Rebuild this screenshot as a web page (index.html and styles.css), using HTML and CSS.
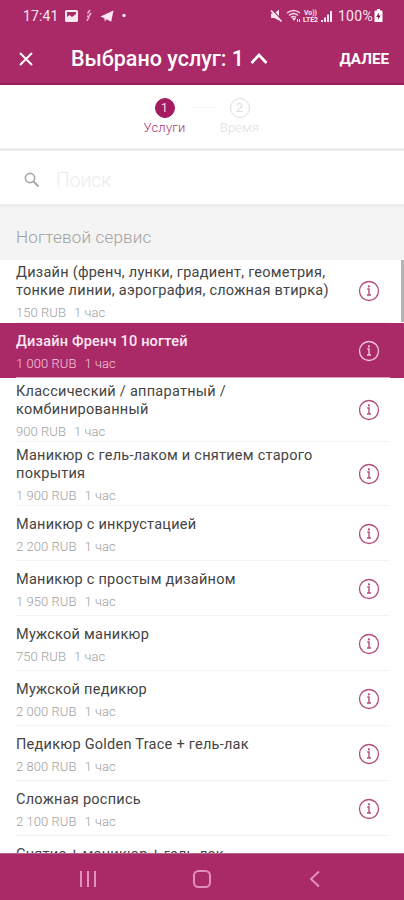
FILE: index.html
```
<!DOCTYPE html>
<html lang="ru">
<head>
<meta charset="utf-8">
<title>Выбор услуг</title>
<link rel="stylesheet" href="styles.css">
</head>
<body>
<svg width="0" height="0" class="defs">
  <symbol id="info" viewBox="0 0 22 22">
    <circle cx="11" cy="11" r="9.5" fill="none" stroke="currentColor" stroke-width="1.3"/>
    <path d="M9.300 9h1.700v6M9 15h4" fill="none" stroke="currentColor" stroke-width="1.400"/>
    <circle cx="10.9" cy="6.4" r="1.100" fill="currentColor"/>
  </symbol>
</svg>
<div class="screen">
  <header class="top">
    <div class="status">
      <span class="clock">17:41</span>
      <svg class="status-left" width="64" height="16" viewBox="0 0 64 16" fill="#fbe6f2">
        <path fill-rule="evenodd" d="M1.5 2h10a1.5 1.5 0 0 1 1.500 1.500v9a1.500 1.500 0 0 1-1.500 1.500h-10a1.500 1.500 0 0 1-1.500-1.500v-9a1.500 1.500 0 0 1 1.500-1.500zM2 4v5l2.500-2 2.500 2 4-3V4z"/>
        <path d="M25 2l-2.500 3.500M22 8l2 1-2 4M26 5l-2 3" fill="none" stroke="#e9b0cf" stroke-width="1.500"/>
        <path d="M35.500 8.500L48.500 2.500 46.200 13.800 41.500 11.300 39.700 13.500 39.500 10.200z"/>
        <circle cx="59" cy="7.500" r="1.700"/>
      </svg>
      <span class="grow"></span>
      <svg width="64" height="16" viewBox="0 0 64 16" fill="#fbe6f2">
        <path d="M1 5.500h3.500L9 1.500v11L4.500 10H1z"/>
        <path d="M1.800 1.500l10.500 11" stroke="#aa2967" stroke-width="1.200"/>
        <path d="M1 2.500l10.500 11" stroke="#fbe6f2" stroke-width="1.800"/>
        <path d="M17 5q6.500-5 13 0M19 7.300q4.500-3.500 9 0M21 9.500q2.500-2 5 0" fill="none" stroke="#f6d3e7" stroke-width="1.500"/>
        <path d="M22 10h4l-2 3zM27 11h1v3h-1zM29 11h1v3h-1z"/>
        <text class="volte" x="34" y="7" textLength="13" lengthAdjust="spacingAndGlyphs">Vo))</text>
        <text class="volte" x="33" y="14" textLength="15" lengthAdjust="spacingAndGlyphs">LTE2</text>
        <path d="M51 12h2v2h-2zM54 9.500h2V14h-2zM57 6.500h2V14h-2zM60 3h2v11h-2z"/>
      </svg>
      <span class="percent">100%</span>
      <svg width="9" height="14" viewBox="0 0 9 14">
        <path d="M3 0h3v1.500h1.500q1 0 1 1V13H.500V2.500q0-1 1-1H3z" fill="#fff"/>
        <path d="M5 3.500L2.200 8H4.200L3.800 11 6.800 6.500H4.800z" fill="#8d1a52"/>
      </svg>
    </div>
    <div class="appbar">
      <svg class="close" width="14" height="14" viewBox="0 0 14 14"><path d="M1 1l12 12M13 1L1 13" stroke="#fff" stroke-width="2"/></svg>
      <span class="title">Выбрано услуг: 1</span>
      <svg class="chevron" width="18" height="12" viewBox="0 0 18 12"><path d="M1.500 10L9 2l7.500 8" fill="none" stroke="#fff" stroke-width="2.700"/></svg>
      <span class="grow"></span>
      <span class="next">ДАЛЕЕ</span>
    </div>
  </header>

  <section class="steps">
    <div class="step active"><span class="num">1</span><span class="label">Услуги</span></div>
    <span class="link"></span>
    <div class="step"><span class="num">2</span><span class="label">Время</span></div>
  </section>

  <section class="search">
    <svg width="16" height="16" viewBox="0 0 16 16" fill="none" stroke="#a9a9a9"><circle cx="6" cy="6" r="4.600" stroke-width="1.700"/><path d="M9.500 9.500l5 5" stroke-width="2"/></svg>
    <span class="placeholder">Поиск</span>
  </section>

  <h2 class="group">Ногтевой сервис</h2>

  <main class="list">
    <article class="row tall"><div class="text"><p class="name">Дизайн (френч, лунки, градиент, геометрия,<br>тонкие линии, аэрография, сложная втирка)</p><p class="meta"><span>150 RUB</span><span>1 час</span></p></div><svg class="info"><use href="#info"/></svg></article>
    <article class="row selected"><div class="text"><p class="name">Дизайн Френч 10 ногтей</p><p class="meta"><span>1 000 RUB</span><span>1 час</span></p></div><svg class="info"><use href="#info"/></svg></article>
    <article class="row tall"><div class="text"><p class="name">Классический / аппаратный /<br>комбинированный</p><p class="meta"><span>900 RUB</span><span>1 час</span></p></div><svg class="info"><use href="#info"/></svg></article>
    <article class="row tall"><div class="text"><p class="name">Маникюр с гель-лаком и снятием старого<br>покрытия</p><p class="meta"><span>1 900 RUB</span><span>1 час</span></p></div><svg class="info"><use href="#info"/></svg></article>
    <article class="row"><div class="text"><p class="name">Маникюр с инкрустацией</p><p class="meta"><span>2 200 RUB</span><span>1 час</span></p></div><svg class="info"><use href="#info"/></svg></article>
    <article class="row"><div class="text"><p class="name">Маникюр с простым дизайном</p><p class="meta"><span>1 950 RUB</span><span>1 час</span></p></div><svg class="info"><use href="#info"/></svg></article>
    <article class="row"><div class="text"><p class="name">Мужской маникюр</p><p class="meta"><span>750 RUB</span><span>1 час</span></p></div><svg class="info"><use href="#info"/></svg></article>
    <article class="row"><div class="text"><p class="name">Мужской педикюр</p><p class="meta"><span>2 000 RUB</span><span>1 час</span></p></div><svg class="info"><use href="#info"/></svg></article>
    <article class="row"><div class="text"><p class="name">Педикюр Golden Trace + гель-лак</p><p class="meta"><span>2 800 RUB</span><span>1 час</span></p></div><svg class="info"><use href="#info"/></svg></article>
    <article class="row"><div class="text"><p class="name">Сложная роспись</p><p class="meta"><span>2 100 RUB</span><span>1 час</span></p></div><svg class="info"><use href="#info"/></svg></article>
    <article class="row"><div class="text"><p class="name">Снятие + маникюр + гель-лак</p></div></article>
    <span class="scrollbar"></span>
  </main>

  <nav class="nav">
    <svg width="18" height="18" viewBox="0 0 18 18"><path d="M2 1v16M9 1v16M16 1v16" stroke="#e190bd" stroke-width="2"/></svg>
    <svg width="20" height="20" viewBox="0 0 20 20"><rect x="2" y="2" width="16" height="16" rx="4.500" fill="none" stroke="#e190bd" stroke-width="2"/></svg>
    <svg width="18" height="18" viewBox="0 0 18 18"><path d="M13 1.500L5 9l8 7.500" fill="none" stroke="#e190bd" stroke-width="2"/></svg>
  </nav>
</div>
</body>
</html>
```
FILE: styles.css
```
* { box-sizing: border-box; }
body { margin: 0; font-family: Roboto, "Noto Sans", sans-serif; background: #fff; }
p, h2 { margin: 0; font-weight: 400; }
svg { flex: none; display: block; }
.defs { position: absolute; }
.screen { width: 404px; height: 900px; overflow: hidden; display: flex; flex-direction: column; }
.grow { flex: 1; }
.top { height: 85px; flex: none; background: #aa2967; border-bottom: 2px solid #981e59; color: #fff; }
.status { height: 32px; display: flex; align-items: center; padding: 0 21px 0 23px; color: #fbe6f2; font-size: 14px; }
.clock { width: 42px; letter-spacing: 0.1px; }
.percent { margin: 0 1px 0 4px; letter-spacing: 0.3px; }
.volte { font-size: 7px; font-weight: 700; }
.appbar { height: 53px; display: flex; align-items: center; padding: 0 15px 0 19px; }
.title { margin-left: 38px; font-size: 21.5px; font-weight: 500; white-space: nowrap; }
.chevron { margin-left: 6px; }
.next { font-size: 15.2px; font-weight: 700; }
.steps { height: 66px; flex: none; border-bottom: 3px solid #ececec; display: flex; justify-content: center; padding-top: 13px; }
.step { width: 50px; display: flex; flex-direction: column; align-items: center; color: #dedede; }
.step.active { color: #a8326b; }
.num { width: 20px; height: 20px; border-radius: 50%; border: 1.5px solid #dedede; font-size: 13px; line-height: 18px; text-align: center; }
.active .num { background: #a51b60; border-color: #a51b60; color: #f5cfe2; }
.label { font-size: 13px; line-height: 20px; font-weight: 300; letter-spacing: 0.2px; }
.link { width: 25px; height: 1px; background: #f5f5f5; margin-top: 9px; }
.search { height: 56px; flex: none; border-bottom: 3px solid #ececec; display: flex; align-items: center; padding: 5px 24px 0; }
.placeholder { margin-left: 16px; font-size: 19.3px; font-weight: 300; color: #ebebeb; }
.group { height: 53px; flex: none; background: #f4f4f4; padding-left: 16px; font-size: 17px; line-height: 60px; font-weight: 300; letter-spacing: 0.2px; color: #a0a0a0; }
.list { position: relative; flex: 1; min-height: 0; overflow: hidden; }
.row { height: 55px; padding: 10px 24px 0 16px; display: flex; justify-content: space-between; position: relative; }
.row::after { content: ""; position: absolute; left: 16px; right: 14px; bottom: 0; height: 1px; background: #f3f3f3; }
.row.tall { height: 64px; padding-top: 5px; }
.row.tall:first-child { height: 63px; padding-top: 4px; }
.name { font-size: 14.5px; line-height: 18px; letter-spacing: 0.26px; color: #444; white-space: nowrap; }
.meta { margin-top: 4px; display: flex; gap: 8px; font-size: 13px; line-height: 18px; font-weight: 300; letter-spacing: 0.05px; color: #a0a0a0; white-space: nowrap; }
.info { width: 22px; height: 22px; margin-top: 7px; color: #b34b7c; }
.tall .info { margin-top: 16px; }
.selected { background: #aa2967; }
.selected::after { background: #dc9abd; }
.selected .name { color: #fdeaf4; font-weight: 500; letter-spacing: 0.2px; }
.selected .meta, .selected .info { color: #f2c9de; }
.scrollbar { position: absolute; top: 0; right: 0; width: 3px; height: 62px; background: #b4b4b4; }
.nav { height: 47px; flex: none; background: #aa2967; border-top: 1px solid #b8608c; display: flex; justify-content: space-between; align-items: center; padding: 3px 80px 0 79px; }
```
